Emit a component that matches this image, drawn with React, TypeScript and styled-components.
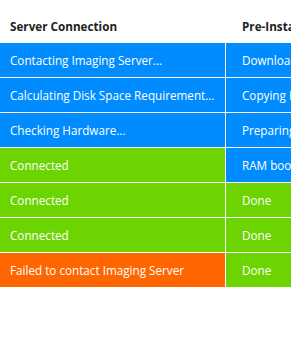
import {FC} from 'react';
import styled, {createGlobalStyle} from 'styled-components';

type Status = 'busy' | 'ok' | 'fail';

const colors: Record<Status, string> = {
    busy: '#008cff',
    ok: '#6cd400',
    fail: '#ff6600',
};

const rows: { server: [string, Status], pre: [string, Status] }[] = [
    {server: ['Contacting Imaging Server...', 'busy'], pre: ['Downloading Image...', 'busy']},
    {server: ['Calculating Disk Space Requirement...', 'busy'], pre: ['Copying Boot Files...', 'busy']},
    {server: ['Checking Hardware...', 'busy'], pre: ['Preparing Disk...', 'busy']},
    {server: ['Connected', 'ok'], pre: ['RAM booting...', 'busy']},
    {server: ['Connected', 'ok'], pre: ['Done', 'ok']},
    {server: ['Connected', 'ok'], pre: ['Done', 'ok']},
    {server: ['Failed to contact Imaging Server', 'fail'], pre: ['Done', 'ok']},
];

export const App: FC = () => {
    return (
        <>
            <GlobalStyle/>
            <Page>
                <Table>
                    <HeaderRow>
                        <HeadCell $first>Server Connection</HeadCell>
                        <HeadCell>Pre-Installation</HeadCell>
                    </HeaderRow>
                    {rows.map(({server, pre}, idx) => (
                        <Row key={idx}>
                            <Cell $first $status={server[1]}>{server[0]}</Cell>
                            <Cell $status={pre[1]}>{pre[0]}</Cell>
                        </Row>
                    ))}
                </Table>
            </Page>
        </>
    );
};

const GlobalStyle = createGlobalStyle`
  html, body {
    margin: 0;
    padding: 0;
    background: #ffffff;
  }
`

const Page = styled.div`
  width: 291px;
  height: 349px;
  overflow: hidden;
  font-family: "Open Sans", "Noto Sans", sans-serif;
`

const Table = styled.div`
  display: flex;
  flex-direction: column;
  width: 452px;
`

const HeaderRow = styled.div`
  display: flex;
  height: 43px;
  align-items: flex-end;
`

const HeadCell = styled.div<{ $first?: boolean }>`
  width: ${p => p.$first ? '216px' : '210px'};
  padding: 0 0 9px ${p => p.$first ? '10px' : '16px'};
  font-size: 11.7px;
  font-weight: 700;
  color: #222222;
  white-space: nowrap;
`

const Row = styled.div`
  display: flex;
  height: 35px;
`

const Cell = styled.div<{ $first?: boolean, $status: Status }>`
  box-sizing: border-box;
  width: 226px;
  height: 35px;
  display: flex;
  align-items: center;
  padding-left: ${p => p.$first ? '10px' : '16px'};
  padding-bottom: 1px;
  background-color: ${p => colors[p.$status]};
  border-bottom: 1px solid rgba(255, 255, 255, 0.5);
  border-right: 1px solid rgba(255, 255, 255, 0.6);
  background-clip: padding-box;
  color: #ffffff;
  font-size: 11.7px;
  white-space: nowrap;
`

export default App;
